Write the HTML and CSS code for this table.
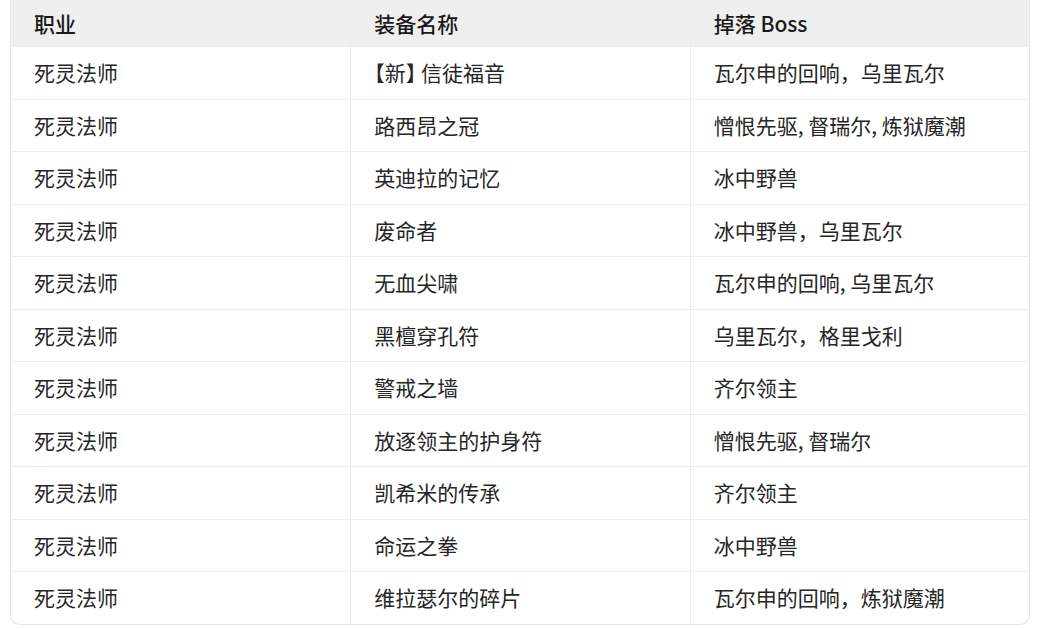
FILE: index.html
```html
<!DOCTYPE html>
<html lang="zh-CN">
<head>
<meta charset="utf-8">
<link rel="stylesheet" href="styles.css">
</head>
<body>
<div class="wrap">
<table class="drops">
<thead>
<tr><th>职业</th><th>装备名称</th><th>掉落 Boss</th></tr>
</thead>
<tbody>
<tr><td>死灵法师</td><td><span class="tight">【新】</span> 信徒福音</td><td>瓦尔申的回响，乌里瓦尔</td></tr>
<tr><td>死灵法师</td><td>路西昂之冠</td><td>憎恨先驱, 督瑞尔, 炼狱魔潮</td></tr>
<tr><td>死灵法师</td><td>英迪拉的记忆</td><td>冰中野兽</td></tr>
<tr><td>死灵法师</td><td>废命者</td><td>冰中野兽，乌里瓦尔</td></tr>
<tr><td>死灵法师</td><td>无血尖啸</td><td>瓦尔申的回响, 乌里瓦尔</td></tr>
<tr><td>死灵法师</td><td>黑檀穿孔符</td><td>乌里瓦尔，格里戈利</td></tr>
<tr><td>死灵法师</td><td>警戒之墙</td><td>齐尔领主</td></tr>
<tr><td>死灵法师</td><td>放逐领主的护身符</td><td>憎恨先驱, 督瑞尔</td></tr>
<tr><td>死灵法师</td><td>凯希米的传承</td><td>齐尔领主</td></tr>
<tr><td>死灵法师</td><td>命运之拳</td><td>冰中野兽</td></tr>
<tr><td>死灵法师</td><td>维拉瑟尔的碎片</td><td>瓦尔申的回响，炼狱魔潮</td></tr>
</tbody>
</table>
</div>
</body>
</html>
```
FILE: styles.css
```css
html, body {
  margin: 0;
  padding: 0;
  background: #ffffff;
}
body {
  padding: 0 9px 0 10px;
  font-family: "Noto Sans CJK SC", "Noto Sans", sans-serif;
  color: #222222;
}
.wrap {
  border: 1px solid #e6e6e6;
  border-top: none;
  border-radius: 0 0 10px 10px;
  overflow: hidden;
  box-shadow: 0 1px 2px rgba(0,0,0,0.04);
}
.drops {
  width: 100%;
  border-collapse: separate;
  border-spacing: 0;
  table-layout: fixed;
}
.drops th, .drops td {
  text-align: left;
  padding: 0 23px;
  font-size: 21px;
  line-height: 1.2;
  vertical-align: middle;
  border-left: 1px solid #ececec;
}
.drops th:first-child, .drops td:first-child {
  border-left: none;
}
.drops th {
  height: 47px;
  background: #efefef;
  font-weight: 500;
  color: #1a1a1a;
}
.drops td {
  height: 51.5px;
  border-top: 1px solid #ededed;
  font-weight: 400;
  color: #262626;
}
.drops tbody tr:first-child td {
  border-top: none;
}
.tight {
  font-feature-settings: "halt" 1;
}
```
